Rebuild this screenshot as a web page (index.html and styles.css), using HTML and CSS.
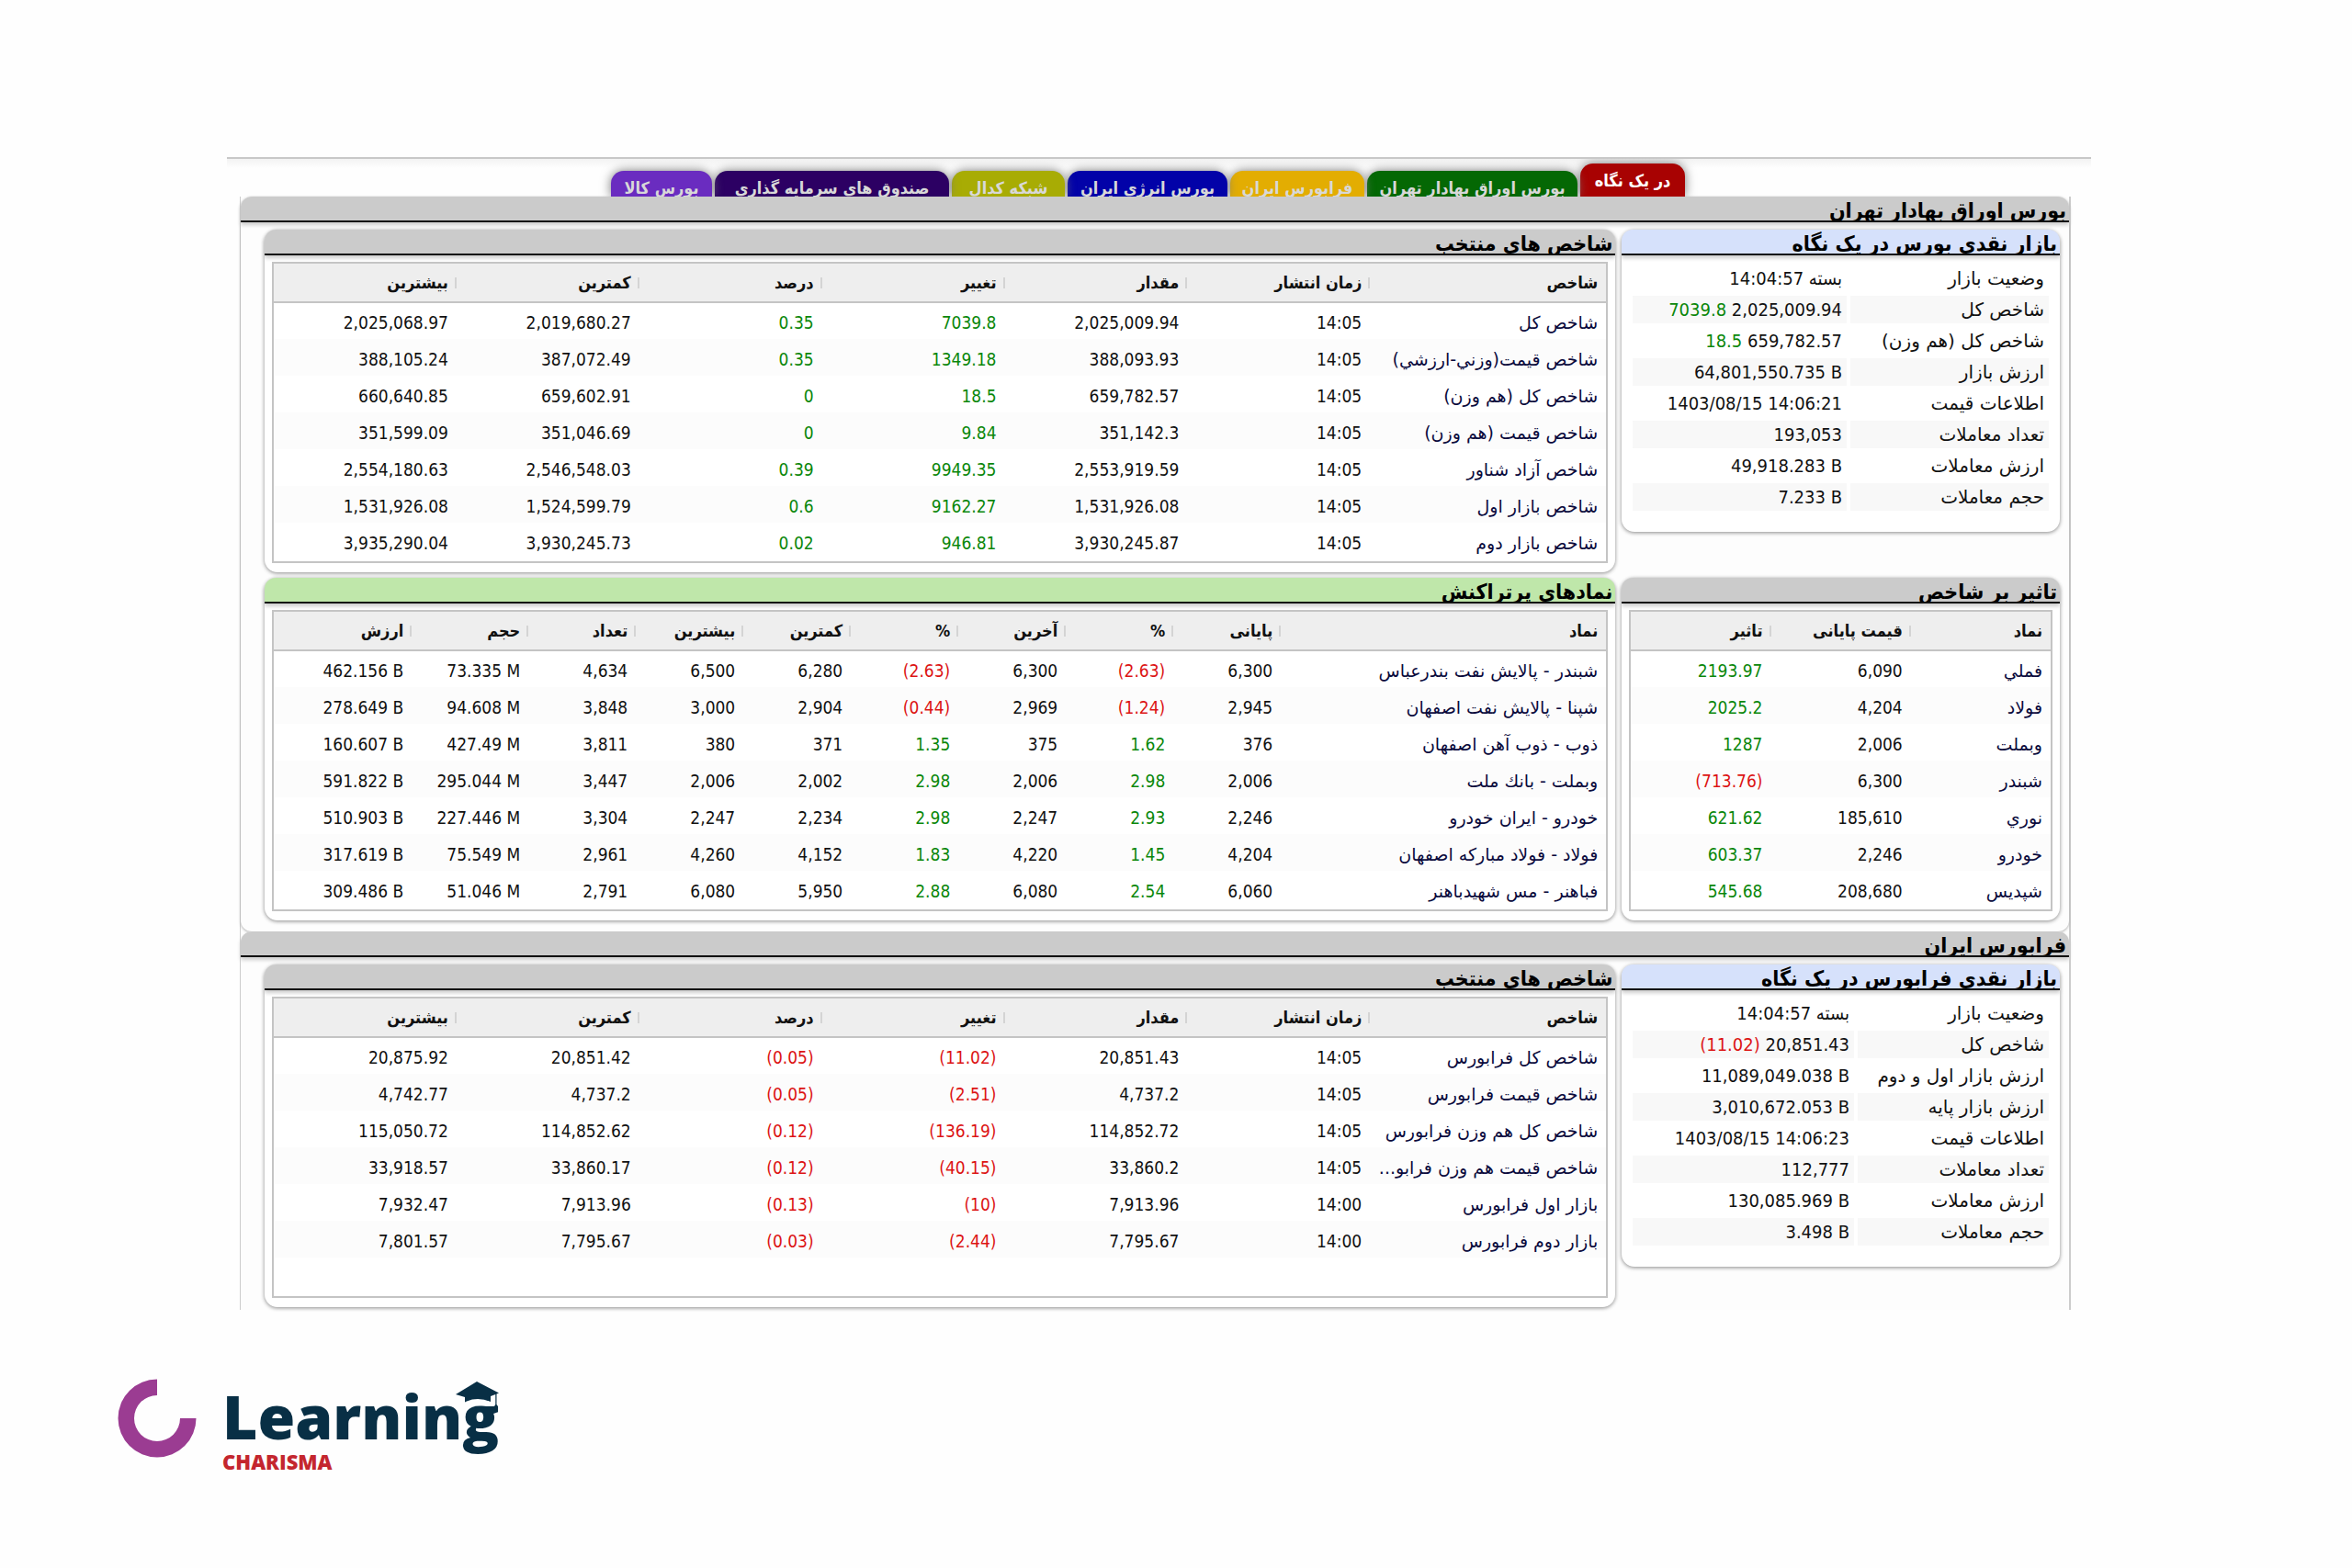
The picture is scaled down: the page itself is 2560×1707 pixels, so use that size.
FILE: index.html
```html
<!DOCTYPE html>
<html lang="fa">
<head>
<meta charset="utf-8">
<title>در یک نگاه</title>
<link rel="stylesheet" href="styles.css">
</head>
<body>
<main class="board" dir="rtl">
  <nav class="tabs">
    <a href="#" class="tab tab-glance active">در یک نگاه</a>
    <a href="#" class="tab tab-tehran">بورس اوراق بهادار تهران</a>
    <a href="#" class="tab tab-ifb">فرابورس ایران</a>
    <a href="#" class="tab tab-energy">بورس انرژی ایران</a>
    <a href="#" class="tab tab-codal">شبکه کدال</a>
    <a href="#" class="tab tab-funds">صندوق های سرمایه گذاری</a>
    <a href="#" class="tab tab-goods">بورس کالا</a>
  </nav>
  <div class="sections">
    <section class="section">
      <h1 class="section-title">بورس اوراق بهادار تهران</h1>
      <div class="cards">
        <section class="card card-info">
          <h2 class="card-title blue">بازار نقدی بورس در یک نگاه</h2>
          <table class="info">
            <colgroup><col class="info-label"><col></colgroup>
            <tr><th scope="row">وضعیت بازار</th><td>بسته 14:04:57</td></tr>
            <tr><th scope="row">شاخص کل</th><td><bdi>2,025,009.94</bdi> <bdi class="up">7039.8</bdi></td></tr>
            <tr><th scope="row">شاخص کل (هم وزن)</th><td><bdi>659,782.57</bdi> <bdi class="up">18.5</bdi></td></tr>
            <tr><th scope="row">ارزش بازار</th><td><bdi>64,801,550.735 B</bdi></td></tr>
            <tr><th scope="row">اطلاعات قیمت</th><td><bdi dir="ltr">1403/08/15 14:06:21</bdi></td></tr>
            <tr><th scope="row">تعداد معاملات</th><td>193,053</td></tr>
            <tr><th scope="row">ارزش معاملات</th><td><bdi>49,918.283 B</bdi></td></tr>
            <tr><th scope="row">حجم معاملات</th><td><bdi>7.233 B</bdi></td></tr>
          </table>
        </section>
        <section class="card">
          <h2 class="card-title">شاخص های منتخب</h2>
          <div class="frame">
            <table class="grid">
              <colgroup><col class="c-index"><col span="6"></colgroup>
              <thead><tr><th>شاخص</th><th>زمان انتشار</th><th>مقدار</th><th>تغییر</th><th>درصد</th><th>کمترین</th><th>بیشترین</th></tr></thead>
              <tbody>
                <tr><td class="name">شاخص کل</td><td>14:05</td><td>2,025,009.94</td><td class="up">7039.8</td><td class="up">0.35</td><td>2,019,680.27</td><td>2,025,068.97</td></tr>
                <tr><td class="name">شاخص قیمت(وزني-ارزشي)</td><td>14:05</td><td>388,093.93</td><td class="up">1349.18</td><td class="up">0.35</td><td>387,072.49</td><td>388,105.24</td></tr>
                <tr><td class="name">شاخص کل (هم وزن)</td><td>14:05</td><td>659,782.57</td><td class="up">18.5</td><td class="up">0</td><td>659,602.91</td><td>660,640.85</td></tr>
                <tr><td class="name">شاخص قیمت (هم وزن)</td><td>14:05</td><td>351,142.3</td><td class="up">9.84</td><td class="up">0</td><td>351,046.69</td><td>351,599.09</td></tr>
                <tr><td class="name">شاخص آزاد شناور</td><td>14:05</td><td>2,553,919.59</td><td class="up">9949.35</td><td class="up">0.39</td><td>2,546,548.03</td><td>2,554,180.63</td></tr>
                <tr><td class="name">شاخص بازار اول</td><td>14:05</td><td>1,531,926.08</td><td class="up">9162.27</td><td class="up">0.6</td><td>1,524,599.79</td><td>1,531,926.08</td></tr>
                <tr><td class="name">شاخص بازار دوم</td><td>14:05</td><td>3,930,245.87</td><td class="up">946.81</td><td class="up">0.02</td><td>3,930,245.73</td><td>3,935,290.04</td></tr>
              </tbody>
            </table>
          </div>
        </section>
        <section class="card">
          <h2 class="card-title">تاثیر بر شاخص</h2>
          <div class="frame">
            <table class="grid">
              <thead><tr><th>نماد</th><th>قیمت پایانی</th><th>تاثیر</th></tr></thead>
              <tbody>
                <tr><td class="name">فملي</td><td>6,090</td><td class="up">2193.97</td></tr>
                <tr><td class="name">فولاد</td><td>4,204</td><td class="up">2025.2</td></tr>
                <tr><td class="name">وبملت</td><td>2,006</td><td class="up">1287</td></tr>
                <tr><td class="name">شبندر</td><td>6,300</td><td class="down">(713.76)</td></tr>
                <tr><td class="name">نوري</td><td>185,610</td><td class="up">621.62</td></tr>
                <tr><td class="name">خودرو</td><td>2,246</td><td class="up">603.37</td></tr>
                <tr><td class="name">شپديس</td><td>208,680</td><td class="up">545.68</td></tr>
              </tbody>
            </table>
          </div>
        </section>
        <section class="card">
          <h2 class="card-title green">نمادهای پرتراکنش</h2>
          <div class="frame">
            <table class="grid">
              <colgroup><col class="c-symbol"><col span="7" class="c-narrow"><col class="c-volume"><col></colgroup>
              <thead><tr><th>نماد</th><th>پایانی</th><th>%</th><th>آخرین</th><th>%</th><th>کمترین</th><th>بیشترین</th><th>تعداد</th><th>حجم</th><th>ارزش</th></tr></thead>
              <tbody>
                <tr><td class="name">شبندر - پالایش نفت بندرعباس</td><td>6,300</td><td class="down">(2.63)</td><td>6,300</td><td class="down">(2.63)</td><td>6,280</td><td>6,500</td><td>4,634</td><td>73.335 M</td><td>462.156 B</td></tr>
                <tr><td class="name">شپنا - پالایش نفت اصفهان</td><td>2,945</td><td class="down">(1.24)</td><td>2,969</td><td class="down">(0.44)</td><td>2,904</td><td>3,000</td><td>3,848</td><td>94.608 M</td><td>278.649 B</td></tr>
                <tr><td class="name">ذوب - ذوب آهن اصفهان</td><td>376</td><td class="up">1.62</td><td>375</td><td class="up">1.35</td><td>371</td><td>380</td><td>3,811</td><td>427.49 M</td><td>160.607 B</td></tr>
                <tr><td class="name">وبملت - بانك ملت</td><td>2,006</td><td class="up">2.98</td><td>2,006</td><td class="up">2.98</td><td>2,002</td><td>2,006</td><td>3,447</td><td>295.044 M</td><td>591.822 B</td></tr>
                <tr><td class="name">خودرو - ایران خودرو</td><td>2,246</td><td class="up">2.93</td><td>2,247</td><td class="up">2.98</td><td>2,234</td><td>2,247</td><td>3,304</td><td>227.446 M</td><td>510.903 B</td></tr>
                <tr><td class="name">فولاد - فولاد مبارکه اصفهان</td><td>4,204</td><td class="up">1.45</td><td>4,220</td><td class="up">1.83</td><td>4,152</td><td>4,260</td><td>2,961</td><td>75.549 M</td><td>317.619 B</td></tr>
                <tr><td class="name">فباهنر - مس شهیدباهنر</td><td>6,060</td><td class="up">2.54</td><td>6,080</td><td class="up">2.88</td><td>5,950</td><td>6,080</td><td>2,791</td><td>51.046 M</td><td>309.486 B</td></tr>
              </tbody>
            </table>
          </div>
        </section>
      </div>
    </section>
    <section class="section section-last">
      <h1 class="section-title">فرابورس ایران</h1>
      <div class="cards">
        <section class="card card-info">
          <h2 class="card-title blue">بازار نقدی فرابورس در یک نگاه</h2>
          <table class="info">
            <colgroup><col class="info-label-narrow"><col></colgroup>
            <tr><th scope="row">وضعیت بازار</th><td>بسته 14:04:57</td></tr>
            <tr><th scope="row">شاخص کل</th><td><bdi>20,851.43</bdi> <bdi class="down">(11.02)</bdi></td></tr>
            <tr><th scope="row">ارزش بازار اول و دوم</th><td><bdi>11,089,049.038 B</bdi></td></tr>
            <tr><th scope="row">ارزش بازار پایه</th><td><bdi>3,010,672.053 B</bdi></td></tr>
            <tr><th scope="row">اطلاعات قیمت</th><td><bdi dir="ltr">1403/08/15 14:06:23</bdi></td></tr>
            <tr><th scope="row">تعداد معاملات</th><td>112,777</td></tr>
            <tr><th scope="row">ارزش معاملات</th><td><bdi>130,085.969 B</bdi></td></tr>
            <tr><th scope="row">حجم معاملات</th><td><bdi>3.498 B</bdi></td></tr>
          </table>
        </section>
        <section class="card">
          <h2 class="card-title">شاخص های منتخب</h2>
          <div class="frame">
            <table class="grid">
              <colgroup><col class="c-index"><col span="6"></colgroup>
              <thead><tr><th>شاخص</th><th>زمان انتشار</th><th>مقدار</th><th>تغییر</th><th>درصد</th><th>کمترین</th><th>بیشترین</th></tr></thead>
              <tbody>
                <tr><td class="name">شاخص کل فرابورس</td><td>14:05</td><td>20,851.43</td><td class="down">(11.02)</td><td class="down">(0.05)</td><td>20,851.42</td><td>20,875.92</td></tr>
                <tr><td class="name">شاخص قیمت فرابورس</td><td>14:05</td><td>4,737.2</td><td class="down">(2.51)</td><td class="down">(0.05)</td><td>4,737.2</td><td>4,742.77</td></tr>
                <tr><td class="name">شاخص کل هم وزن فرابورس</td><td>14:05</td><td>114,852.72</td><td class="down">(136.19)</td><td class="down">(0.12)</td><td>114,852.62</td><td>115,050.72</td></tr>
                <tr><td class="name">شاخص قیمت هم وزن فرابو...</td><td>14:05</td><td>33,860.2</td><td class="down">(40.15)</td><td class="down">(0.12)</td><td>33,860.17</td><td>33,918.57</td></tr>
                <tr><td class="name">بازار اول فرابورس</td><td>14:00</td><td>7,913.96</td><td class="down">(10)</td><td class="down">(0.13)</td><td>7,913.96</td><td>7,932.47</td></tr>
                <tr><td class="name">بازار دوم فرابورس</td><td>14:00</td><td>7,795.67</td><td class="down">(2.44)</td><td class="down">(0.03)</td><td>7,795.67</td><td>7,801.57</td></tr>
              </tbody>
            </table>
          </div>
        </section>
      </div>
    </section>
  </div>
</main>
<footer class="brand">
  <svg class="brand-mark" viewBox="0 0 86 86" aria-hidden="true"><path d="M43 0.5A42.5 42.5 0 1 0 85.5 43H68A25 25 0 1 1 43 18Z" fill="#9b3c92"/></svg>
  <div class="brand-text">
    <div class="brand-name">Learning<svg class="brand-cap" viewBox="0 0 48 28" aria-hidden="true"><path d="M23 0L47 12.500L44.500 13.500V25L46 27H42L43.300 25V14L38 16V22Q23 16 10 22.500V17L0 14Z" fill="#082f45"/></svg></div>
    <div class="brand-sub">CHARISMA</div>
  </div>
</footer>
</body>
</html>
```
FILE: styles.css
```css
* { box-sizing: border-box; }

body {
  margin: 0;
  padding-top: 171px;
  background: #fefefe;
  color: #111;
  font-family: "DejaVu Sans Condensed", "DejaVu Sans", sans-serif;
  font-size: 19px;
}

.board {
  margin: 0 284px 0 247px;
  border-top: 2px solid #c8c8c8;
  background: linear-gradient(#f3f3f3, #fefefe 10px);
}

/* Tabs */
.tabs {
  display: flex;
  align-items: flex-end;
  gap: 3px;
  height: 41px;
  padding-right: 442px;
  overflow: hidden;
}
.tab {
  height: 28px;
  border-radius: 14px 14px 0 0;
  box-shadow: 0 0 12px #777;
  color: #d8d8d8;
  font-size: 18px;
  font-weight: bold;
  line-height: 38px;
  text-align: center;
  text-decoration: none;
  white-space: nowrap;
}
.tab.active { height: 36px; color: #fff; }
.tab-glance { width: 114px; background: #a80202; }
.tab-tehran { width: 229px; background: #046804; }
.tab-ifb { width: 146px; background: #e3ad02; }
.tab-energy { width: 174px; background: #0202a8; }
.tab-codal { width: 123px; background: #a8ac04; }
.tab-funds { width: 255px; background: #2c0063; }
.tab-goods { width: 110px; background: #6a2cc0; }

/* Sections */
.sections {
  margin: 0 22px 0 14px;
  border: solid #ccc;
  border-width: 0 2px 0 1px;
}
.section {
  padding-bottom: 12px;
  border-radius: 12px;
  box-shadow: 0 1px 3px #aaa;
  background: #fdfdfd;
}
.section-last { padding-bottom: 3px; border-radius: 12px 12px 0 0; box-shadow: none; }
.section-title,
.card-title {
  height: 28px;
  margin: 0;
  padding: 0 3px;
  overflow: hidden;
  border-bottom: 2px solid #111;
  border-radius: 12px 12px 0 0;
  box-shadow: 0 3px 4px #ccc;
  background: #cbcbcb;
  color: #000;
  font-size: 23px;
  font-weight: bold;
  line-height: 30px;
  white-space: nowrap;
}
.card-title.blue { background: #d6e1fb; }
.card-title.green { background: #bfe7aa; }

.cards {
  display: grid;
  grid-template-columns: 477fr 1471fr;
  gap: 6px 7px;
  padding: 8px 10px 0 26px;
}
.card {
  padding-bottom: 10px;
  border-radius: 14px;
  box-shadow: 0 1px 4px #888;
  background: #fff;
}
.card-info { align-self: start; padding-bottom: 19px; }

/* Data tables */
.frame {
  min-height: 328px;
  margin: 7px 8px 0;
  border: 2px solid #c4c4c4;
}
.grid {
  width: 100%;
  table-layout: fixed;
  border-collapse: collapse;
}
.grid th {
  height: 42px;
  padding: 0 9px 0 0;
  border-bottom: 2px solid #c4c4c4;
  background: linear-gradient(#d4d4d4, #d4d4d4) no-repeat right center / 2px 12px #eee;
  font-size: 18px;
  font-weight: bold;
  text-align: right;
  white-space: nowrap;
}
.grid th:first-child { background: #eee; }
.grid td {
  height: 40px;
  padding: 3px 9px 0 0;
  direction: ltr;
  text-align: right;
  white-space: nowrap;
}
.grid tr:nth-child(even) td { background: #fcfcfc; }
.grid .name { direction: rtl; color: #0a0a3c; font-family: "DejaVu Sans", sans-serif; }
.grid .up, .up { color: #0a870a; }
.grid .down, .down { color: #dc1414; }
.c-index { width: 257px; }
.c-symbol { width: 354px; }
.c-narrow { width: 117px; }
.c-volume { width: 127px; }

/* Key and value list */
.info {
  width: calc(100% - 16px);
  margin: 6px 8px 0;
  table-layout: fixed;
  border-spacing: 4px;
  font-size: 20px;
}
.info-label { width: 216px; }
.info-label-narrow { width: 208px; }
.info th, .info td {
  height: 30px;
  padding: 0 5px;
  font-weight: normal;
  line-height: 28px;
  text-align: right;
  white-space: nowrap;
}
.info th { font-family: "DejaVu Sans", sans-serif; }
.info tr:nth-child(even) > * { background: #f8f8f8; }

/* Brand */
.brand {
  display: flex;
  gap: 28px;
  padding: 75px 0 60px 128px;
}
.brand-mark { width: 86px; height: 86px; }
.brand-text { font-family: "Open Sans", sans-serif; font-weight: 800; }
.brand-name {
  position: relative;
  color: #082f45;
  font-size: 66px;
  line-height: 80px;
}
.brand-cap { position: absolute; top: 3px; right: -1px; width: 48px; height: 28px; }
.brand-sub { color: #c4262e; font-size: 22px; line-height: 20px; }
```
